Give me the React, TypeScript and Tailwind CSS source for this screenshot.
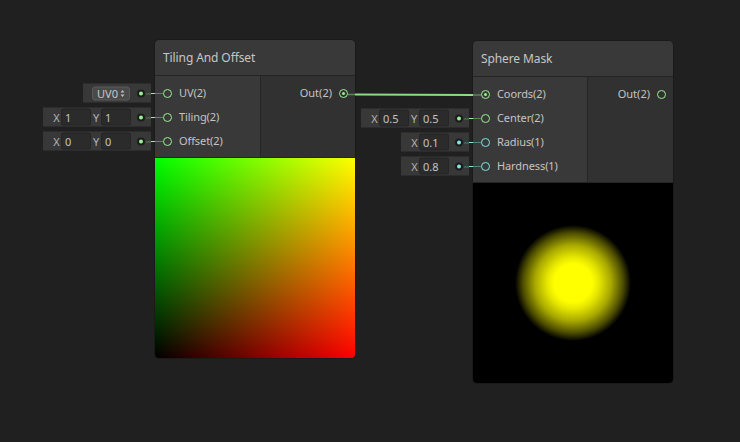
import React from 'react';

const GREEN = '#9aef92';

type Kind = 'v2' | 'v1';

function FieldDot({ kind }: { kind: Kind }) {
  return (
    <div className="relative w-[8px] h-[8px] rounded-full bg-[#1c1c1c] flex items-center justify-center shrink-0">
      <div className={kind === 'v2' ? 'w-[4px] h-[4px] rounded-full bg-[#9aef92]' : 'w-[4px] h-[4px] rounded-full bg-[#84e4e7]'} />
    </div>
  );
}

function NumBox({ value }: { value: string }) {
  return (
    <div className="w-[30px] h-[17px] bg-[#2b2b2b] border border-[#252525] rounded-[2px] pl-[3px] flex items-center text-[11px] text-[#c4c4c4] leading-none">
      {value}
    </div>
  );
}

function Axis({ label, w }: { label: string; w: string }) {
  return <span className={'text-center text-[11px] text-[#b4b4b4] leading-none ' + w}>{label}</span>;
}

// little field card sitting to the left of an input port
function Field({ kind, children }: { kind: Kind; children: React.ReactNode }) {
  return (
    <div className="absolute right-full mr-[4px] top-1/2 -translate-y-1/2 h-[19px] bg-[#383838] flex items-center pl-[9px] pr-[6px]">
      {children}
      <div className="ml-[6px]">
        <FieldDot kind={kind} />
      </div>
      <div
        className={
          kind === 'v2'
            ? 'absolute right-0 top-1/2 w-[5px] h-px bg-[#557a53]'
            : 'absolute right-0 top-1/2 w-[5px] h-px bg-[#4f7879]'
        }
      />
    </div>
  );
}

function Port({ kind, connected }: { kind: Kind; connected?: boolean }) {
  const ring =
    kind === 'v2'
      ? 'w-[9px] h-[9px] rounded-full border-[1.5px] border-[#9aef92] flex items-center justify-center shrink-0'
      : 'w-[9px] h-[9px] rounded-full border-[1.5px] border-[#84e4e7] flex items-center justify-center shrink-0';
  return (
    <div className={ring}>
      {connected && <div className="w-[3px] h-[3px] rounded-full bg-[#9aef92]" />}
    </div>
  );
}

type Input = { label: string; kind: Kind; connected?: boolean; field?: React.ReactNode };

function InputRow({ input }: { input: Input }) {
  return (
    <div className="relative h-[24px] flex items-center pl-[8px]">
      {input.field && (
        <>
          <Field kind={input.kind}>{input.field}</Field>
          <div
            className={
              input.kind === 'v2'
                ? 'absolute right-full top-1/2 w-[4px] h-px bg-[#9aef92]'
                : 'absolute right-full top-1/2 w-[4px] h-px bg-[#84e4e7]'
            }
          />
          <div
            className={
              input.kind === 'v2'
                ? 'absolute left-0 top-1/2 w-[8px] h-px bg-[#5c865a]'
                : 'absolute left-0 top-1/2 w-[8px] h-px bg-[#538486]'
            }
          />
        </>
      )}
      <Port kind={input.kind} connected={input.connected} />
      <span className="ml-[7px] text-[11px] text-[#c4c4c4] whitespace-nowrap tracking-[-0.1px]">{input.label}</span>
    </div>
  );
}

function Node({
  className,
  title,
  inputs,
  output,
  outConnected,
  inWidth,
  children,
}: {
  className: string;
  title: string;
  inputs: Input[];
  output: string;
  outConnected?: boolean;
  inWidth: string;
  children: React.ReactNode;
}) {
  return (
    <div className={'absolute w-[202px] rounded-[5px] border border-[#1a1a1a] bg-[#393939] ' + className}>
      <div className="h-[36px] flex items-center px-[8px] border-b border-[#242424] rounded-t-[5px] text-[12px] text-[#c6c6c6] tracking-[-0.1px]">
        {title}
      </div>
      <div className="flex border-b border-[#242424]">
        <div className={'pt-[5px] pb-[4px] bg-[#393939] border-r border-[#262626] ' + inWidth}>
          {inputs.map((i) => (
            <InputRow key={i.label} input={i} />
          ))}
        </div>
        <div className="flex-1 bg-[#313131] pt-[5px] pb-[4px]">
          <div className="h-[24px] flex items-center justify-end pr-[7px] gap-[7px]">
            <span className="text-[11px] text-[#c4c4c4]">{output}</span>
            <Port kind="v2" connected={outConnected} />
          </div>
        </div>
      </div>
      {children}
    </div>
  );
}

function XY({ x, y }: { x: string; y: string }) {
  return (
    <div className="flex items-center">
      <Axis label="X" w="w-[9px]" />
      <NumBox value={x} />
      <Axis label="Y" w="w-[10px]" />
      <NumBox value={y} />
    </div>
  );
}

function X({ x }: { x: string }) {
  return (
    <div className="flex items-center">
      <Axis label="X" w="w-[9px]" />
      <NumBox value={x} />
    </div>
  );
}

export default function App() {
  return (
    <div
      className="relative w-[740px] h-[442px] bg-[#202020] overflow-hidden"
      style={{ fontFamily: '"Noto Sans", "Open Sans", sans-serif' }}
    >
      <Node
        className="left-[154px] top-[39px]"
        title="Tiling And Offset"
        output="Out(2)"
        outConnected
        inWidth="w-[106px]"
        inputs={[
          {
            label: 'UV(2)',
            kind: 'v2',
            field: (
              <div className="mr-[1px] w-[38px] h-[14px] rounded-[3px] bg-[#4a4a4a] border border-[#5a5a5a] flex items-center justify-center gap-[2px] text-[11px] text-[#c8c8c8] leading-none">
                UV0
                <svg width="5" height="8" viewBox="0 0 5 8">
                  <path d="M0.5 3 L2.5 0.5 L4.5 3 Z M0.5 5 L2.5 7.5 L4.5 5 Z" fill="#bdbdbd" />
                </svg>
              </div>
            ),
          },
          { label: 'Tiling(2)', kind: 'v2', field: <XY x="1" y="1" /> },
          { label: 'Offset(2)', kind: 'v2', field: <XY x="0" y="0" /> },
        ]}
      >
        <div className="h-[200px] rounded-b-[4px] bg-[linear-gradient(to_right,#000,#ff0000),linear-gradient(to_top,#000,#00ff00)] bg-blend-screen" />
      </Node>

      <Node
        className="left-[472px] top-[40px]"
        title="Sphere Mask"
        output="Out(2)"
        inWidth="w-[115px]"
        inputs={[
          { label: 'Coords(2)', kind: 'v2', connected: true },
          { label: 'Center(2)', kind: 'v2', field: <XY x="0.5" y="0.5" /> },
          { label: 'Radius(1)', kind: 'v1', field: <X x="0.1" /> },
          { label: 'Hardness(1)', kind: 'v1', field: <X x="0.8" /> },
        ]}
      >
        <div className="h-[200px] rounded-b-[4px] bg-[radial-gradient(circle_at_50%_50%,#ffff00_0px,#ffff00_19px,#e6e600_26px,#a8a800_38px,#4d4d00_50px,#000_58px)]" />
      </Node>

      {/* edge between Out(2) and Coords(2) */}
      <svg className="absolute inset-0 pointer-events-none" width="740" height="442">
        <line x1="348" y1="94.5" x2="355" y2="94.5" stroke="#5c865a" strokeWidth="1.5" />
        <line x1="355" y1="94.5" x2="473" y2="95" stroke={GREEN} strokeWidth="2" opacity="0.9" />
        <line x1="473" y1="95" x2="481" y2="95" stroke="#5c865a" strokeWidth="1.5" />
      </svg>
    </div>
  );
}
